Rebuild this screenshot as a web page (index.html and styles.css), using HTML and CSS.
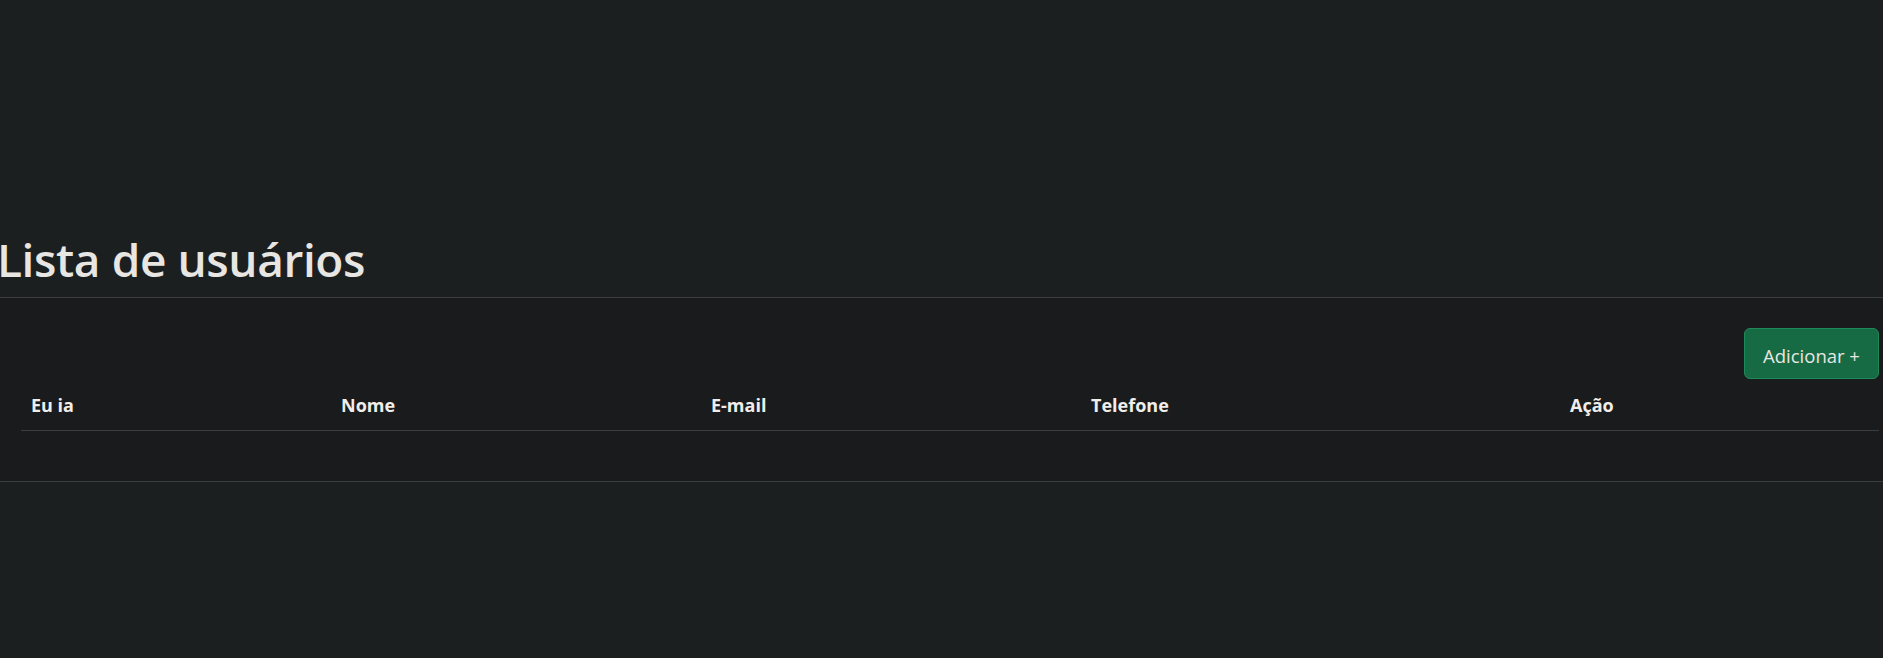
FILE: index.html
```html
<!DOCTYPE html>
<html lang="pt-BR">
<head>
<meta charset="utf-8">
<title>Lista de usuários</title>
<link rel="stylesheet" href="styles.css">
</head>
<body>
<main class="page">
  <header class="page-head">
    <h1 class="title">Lista de usuários</h1>
  </header>
  <section class="panel">
    <div class="toolbar">
      <button class="btn-add" type="button">Adicionar +</button>
    </div>
    <table class="users">
      <colgroup>
        <col class="c1"><col class="c2"><col class="c3"><col class="c4"><col class="c5">
      </colgroup>
      <thead>
        <tr>
          <th>Eu ia</th>
          <th>Nome</th>
          <th>E-mail</th>
          <th>Telefone</th>
          <th>Ação</th>
        </tr>
      </thead>
      <tbody></tbody>
    </table>
  </section>
</main>
</body>
</html>
```

FILE: styles.css
```css
html, body {
  margin: 0;
  padding: 0;
}
body {
  background: #1c1f20;
  color: #e8e6e3;
  font-family: "Open Sans", "Noto Sans", sans-serif;
  width: 1883px;
  height: 658px;
  overflow: hidden;
}
.page {
  display: flex;
  flex-direction: column;
  padding-top: 228px;
}
.page-head {
  border-bottom: 1px solid #3a3e41;
  padding-bottom: 7px;
}
.title {
  margin: 0 0 0 -3px;
  font-size: 46px;
  font-weight: 600;
  line-height: 62px;
  letter-spacing: -0.4px;
  color: #e8e6e3;
}
.panel {
  background: #1a1b1d;
  border-bottom: 1px solid #3a3e41;
  padding: 30px 4px 50px 21px;
}
.toolbar {
  display: flex;
  justify-content: flex-end;
}
.btn-add {
  font-family: "Open Sans", "Noto Sans", sans-serif;
  font-size: 18.5px;
  color: #e8e6e3;
  background: #166b44;
  border: 1px solid #1f8a59;
  border-radius: 6px;
  height: 51px;
  width: 135px;
  padding: 3px 10px 0;
  cursor: pointer;
}
.users {
  width: 100%;
  border-collapse: collapse;
  table-layout: fixed;
}
.c1 { width: 310px; }
.c2 { width: 370px; }
.c3 { width: 380px; }
.c4 { width: 479px; }
.c5 { width: auto; }
.users th {
  text-align: left;
  font-size: 18px;
  font-weight: 700;
  padding: 9px 10px 8px;
  line-height: 34px;
  border-bottom: 1px solid #3a3e41;
  color: #f0eeeb;
}
```
